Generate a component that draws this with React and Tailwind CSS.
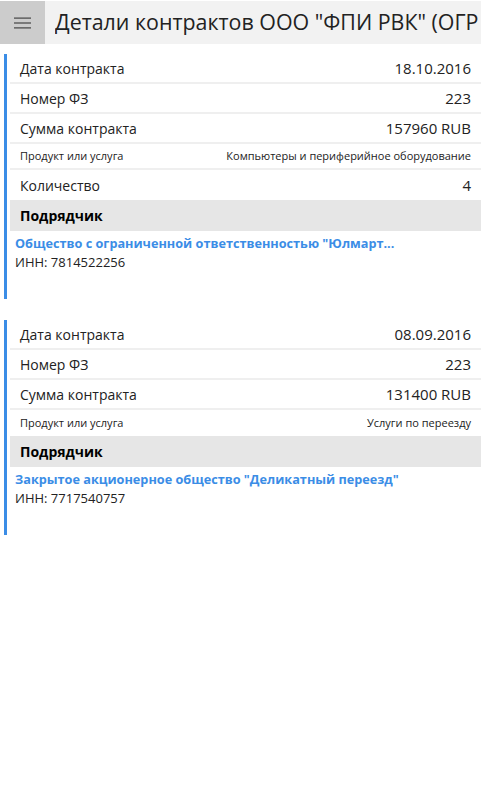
const contracts = [
  {
    date: "18.10.2016",
    fz: "223",
    sum: "157960 RUB",
    product: "Компьютеры и периферийное оборудование",
    qty: "4",
    company: 'Общество с ограниченной ответственностью "Юлмарт...',
    inn: "7814522256",
  },
  {
    date: "08.09.2016",
    fz: "223",
    sum: "131400 RUB",
    product: "Услуги по переезду",
    company: 'Закрытое акционерное общество "Деликатный переезд"',
    inn: "7717540757",
  },
];

function Row({ label, value, small, last }) {
  return (
    <div
      className={
        "flex items-center justify-between px-[10px] " +
        (small ? "h-[26px] text-[11px] " : "h-[30px] text-[14px] ") +
        (last ? "" : "border-b-2 border-[#efefef]")
      }
    >
      <span>{label}</span>
      <span className={small ? "" : "text-[15px]"}>{value}</span>
    </div>
  );
}

function Contract({ c, first }) {
  return (
    <div className={(first ? "mt-[10px] h-[245px]" : "mt-[21px] h-[215px]") + " ml-[4px] mr-[5px] border-l-[3px] border-[#3b8de6] pl-[3px]"}>
      <Row label="Дата контракта" value={c.date} />
      <Row label="Номер ФЗ" value={c.fz} />
      <Row label="Сумма контракта" value={c.sum} />
      <Row label="Продукт или услуга" value={c.product} small last={!c.qty} />
      {c.qty && <Row label="Количество" value={c.qty} last />}
      <div className="flex h-[31px] items-center bg-[#e6e6e6] px-[10px] text-[14px] font-bold text-black">
        Подрядчик
      </div>
      <div className="mt-[3px] truncate pl-[5px] text-[12.7px] font-bold text-[#3b8de6]">{c.company}</div>
      <div className="pl-[5px] text-[13px]">ИНН: {c.inn}</div>
    </div>
  );
}

export default function App() {
  return (
    <div
      className="h-[810px] w-[486px] overflow-hidden bg-white text-[#222]"
      style={{ fontFamily: '"Open Sans", "Noto Sans", sans-serif' }}
    >
      <div className="mt-[1px] mr-[5px] flex h-[43px] items-center bg-[#f2f2f2]">
        <div className="flex h-full w-[45px] shrink-0 items-center justify-center bg-[#cccccc]">
          <svg width="17" height="12" viewBox="0 0 17 12">
            <rect x="0" y="0.5" width="17" height="1.2" fill="#444" />
            <rect x="0" y="5.4" width="17" height="1.2" fill="#444" />
            <rect x="0" y="10.3" width="17" height="1.2" fill="#444" />
          </svg>
        </div>
        <div className="ml-[10px] min-w-0 overflow-hidden whitespace-nowrap text-[21.4px] text-[#222]">
          Детали контрактов ООО "ФПИ РВК" (ОГР
        </div>
      </div>
      {contracts.map((c, i) => (
        <Contract key={i} c={c} first={i === 0} />
      ))}
    </div>
  );
}
